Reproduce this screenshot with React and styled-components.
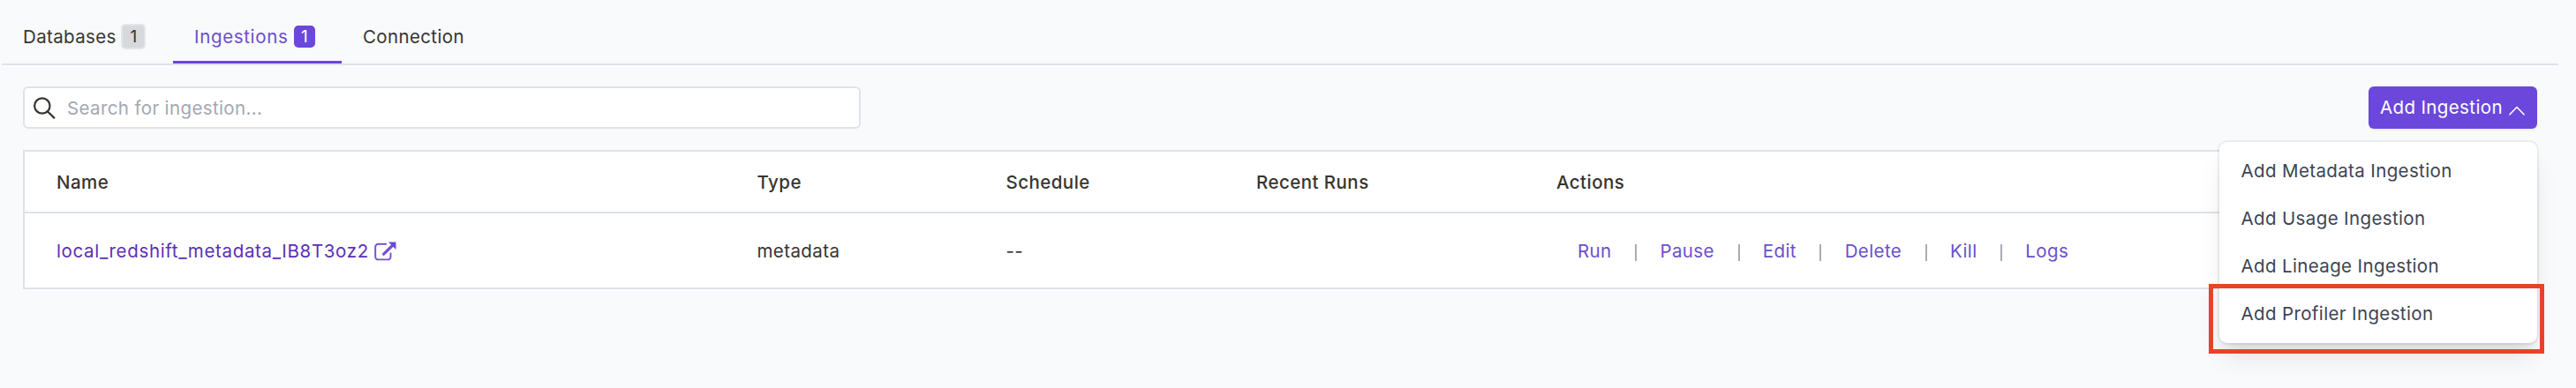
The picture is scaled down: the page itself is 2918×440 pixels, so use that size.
import React from "react";
import styled, { createGlobalStyle } from "styled-components";

const GlobalStyle = createGlobalStyle`
  * { box-sizing: border-box; }
  body {
    margin: 0;
    background: #f9fafc;
    color: #37352f;
    font-family: Inter, "Liberation Sans", sans-serif;
    font-size: 20.5px;
    letter-spacing: 0.37px;
    line-height: 30px;
  }
  button, input { font: inherit; letter-spacing: inherit; }
`;

const Page = styled.main`
  height: 440px;
  padding: 0 20px 0 2px;
  overflow: hidden;
`;

const TabBar = styled.nav`
  display: flex;
  height: 74px;
  border-bottom: 2px solid #dfe2ea;
`;

const Tab = styled.a`
  display: flex;
  align-items: center;
  width: ${(p) => p.$width}px;
  height: 72px;
  padding: 14px 0 0 24px;
  white-space: nowrap;
  letter-spacing: ${(p) => (p.$active ? 0.65 : 0.37)}px;
  color: ${(p) => (p.$active ? "#6b4fcb" : "#37352f")};
  border-bottom: 3px solid ${(p) => (p.$active ? "#6b47d3" : "transparent")};
`;

const Count = styled.span`
  display: flex;
  align-items: center;
  justify-content: center;
  width: ${(p) => (p.$active ? 24 : 28)}px;
  height: ${(p) => (p.$active ? 25 : 29)}px;
  margin-left: ${(p) => (p.$active ? 6.5 : 5.5)}px;
  border-radius: 5px;
  font-size: 19px;
  letter-spacing: 0;
  color: ${(p) => (p.$active ? "#fff" : "#37352f")};
  background: ${(p) => (p.$active ? "#6b47dc" : "#d6d8dc")};
  border: ${(p) => (p.$active ? "0" : "2px solid #e3e5e9")};
`;

const Content = styled.section`
  padding: 24px 24px 0;
`;

const Toolbar = styled.div`
  display: flex;
  justify-content: space-between;
  height: 48px;
  margin-bottom: 24px;
`;

const SearchBox = styled.label`
  display: flex;
  align-items: center;
  width: 949px;
  padding-left: 10px;
  gap: 13px;
  background: #fff;
  border: 2px solid #dfe2ea;
  border-radius: 6px;
`;

const SearchInput = styled.input`
  flex: 1;
  padding: 1px 0 0;
  border: 0;
  outline: 0;
  background: transparent;
  &::placeholder { color: #a3a7b2; opacity: 1; }
`;

const MenuAnchor = styled.div`
  position: relative;
`;

const AddButton = styled.button`
  display: flex;
  align-items: center;
  width: 191px;
  height: 48px;
  padding: 0 0 1px 13px;
  gap: 7px;
  white-space: nowrap;
  color: #fff;
  background: #6b47dc;
  border: 0;
  border-radius: 6px;
  box-shadow: 0 2px 3px rgba(0, 0, 0, 0.06);
  svg { margin-top: 7px; }
`;

const Menu = styled.ul`
  position: absolute;
  z-index: 1;
  top: 63px;
  right: 0;
  width: 360px;
  margin: 0;
  padding: 6px 0;
  list-style: none;
  color: #3d4454;
  background: #fff;
  border-radius: 9px;
  box-shadow: 0 0 0 2px rgba(0, 0, 0, 0.05), 0 20px 30px -6px rgba(0, 0, 0, 0.1),
    0 8px 12px -4px rgba(0, 0, 0, 0.08);
`;

const MenuItem = styled.li`
  position: relative;
  height: 54px;
  padding: 12px 24.5px;
  white-space: nowrap;
`;

const Highlight = styled.span`
  position: absolute;
  top: -7px;
  left: -12px;
  width: 380px;
  height: 79px;
  border: 5px solid #e84228;
`;

const Table = styled.div`
  background: #fff;
  border: 2px solid #dfe2ea;
`;

const Row = styled.div`
  display: grid;
  grid-template-columns: 793.5px 282px 283.5px 340px 1fr;
  align-items: center;
  height: ${(p) => (p.$head ? 70 : 84)}px;
  padding: 1px 0 0 36px;
  font-weight: ${(p) => (p.$head ? 500 : 400)};
  letter-spacing: ${(p) => (p.$head ? 0.45 : 0.4)}px;
  border-bottom: ${(p) => (p.$head ? "2px solid #dfe2ea" : "0")};
  white-space: nowrap;
`;

const NameLink = styled.a`
  display: flex;
  align-items: center;
  gap: 6px;
  letter-spacing: 0.65px;
  color: #5a30b5;
`;

const Actions = styled.div`
  display: flex;
  align-items: center;
  padding-left: 24px;
`;

const Action = styled.a`
  color: #6b4fcb;
  & + &::before {
    content: "";
    display: inline-block;
    width: 2px;
    height: 19px;
    margin: 0 26.2px 0 26.6px;
    vertical-align: -4px;
    background: #a9abb6;
  }
`;

const SearchIcon = () => (
  <svg width="25" height="25" viewBox="0 0 25 25" fill="none" stroke="#37352f" strokeWidth="2.2" strokeLinecap="round">
    <circle cx="9.8" cy="10" r="8.7" />
    <path d="M16 16.5 23.3 23.6" />
  </svg>
);

const ChevronUp = () => (
  <svg width="18" height="11" viewBox="0 0 18 11" fill="none" stroke="#fff" strokeWidth="1.6" strokeLinecap="round" strokeLinejoin="round">
    <path d="M1 9.8 9 1.5 17 9.8" />
  </svg>
);

const ExternalIcon = () => (
  <svg width="25" height="22" viewBox="0 0 25 22" fill="none" stroke="#7350d4">
    <path d="M14 2.8H4.4A3.2 3.2 0 0 0 1.2 6V17.2A3.2 3.2 0 0 0 4.4 20.4H15.3A3.2 3.2 0 0 0 18.5 17.2V12.5" strokeWidth="1.9" />
    <path d="M10.6 14.2 21 4" strokeWidth="3.2" strokeLinecap="round" />
    <path d="M16 .5H24.5V9Z" fill="#6b47dc" stroke="none" />
  </svg>
);

const columns = ["Name", "Type", "Schedule", "Recent Runs", "Actions"];
const actions = ["Run", "Pause", "Edit", "Delete", "Kill", "Logs"];
const options = ["Metadata", "Usage", "Lineage", "Profiler"];

export default function App() {
  return (
    <Page>
      <GlobalStyle />
      <TabBar>
        <Tab $width={194}>Databases<Count>1</Count></Tab>
        <Tab $width={191} $active>Ingestions<Count $active>1</Count></Tab>
        <Tab $width={160}>Connection</Tab>
      </TabBar>
      <Content>
        <Toolbar>
          <SearchBox>
            <SearchIcon />
            <SearchInput placeholder="Search for ingestion..." />
          </SearchBox>
          <MenuAnchor>
            <AddButton>Add Ingestion<ChevronUp /></AddButton>
            <Menu>
              {options.map((name) => (
                <MenuItem key={name}>
                  Add {name} Ingestion
                  {name === "Profiler" && <Highlight />}
                </MenuItem>
              ))}
            </Menu>
          </MenuAnchor>
        </Toolbar>
        <Table>
          <Row $head>{columns.map((c) => <span key={c}>{c}</span>)}</Row>
          <Row>
            <NameLink>local_redshift_metadata_IB8T3oz2<ExternalIcon /></NameLink>
            <span>metadata</span>
            <span>--</span>
            <span />
            <Actions>{actions.map((a) => <Action key={a}>{a}</Action>)}</Actions>
          </Row>
        </Table>
      </Content>
    </Page>
  );
}
